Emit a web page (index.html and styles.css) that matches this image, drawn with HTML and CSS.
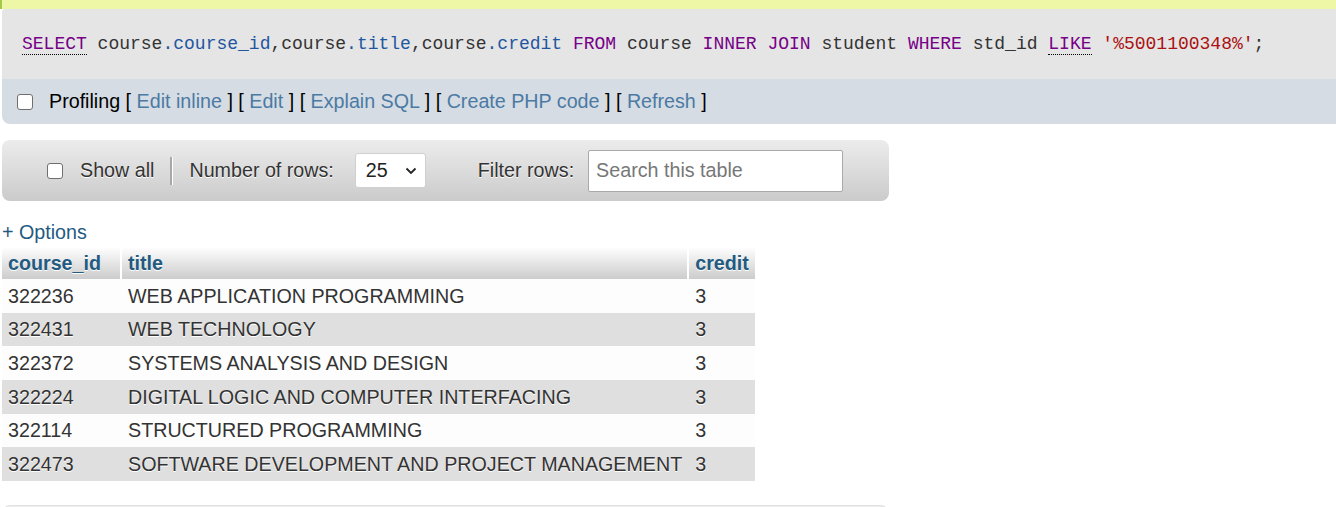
FILE: index.html
```html
<!DOCTYPE html>
<html>
<head>
<meta charset="utf-8">
<link rel="stylesheet" href="styles.css">
</head>
<body>
<div class="page">
  <div class="msg"></div>
  <div class="sqlbox">
    <code class="sql"><span class="kw abbr">SELECT</span> course<span class="v2">.course_id</span>,course<span class="v2">.title</span>,course<span class="v2">.credit</span> <span class="kw">FROM</span> course <span class="kw">INNER</span> <span class="kw">JOIN</span> student <span class="kw">WHERE</span> std_id <span class="kw abbr">LIKE</span> <span class="str">'%5001100348%'</span>;</code>
  </div>
  <div class="profbar">
    <span class="cb"></span>
    <span class="ptext">Profiling [ <a class="plink">Edit inline</a> ] [ <a class="plink">Edit</a> ] [ <a class="plink">Explain SQL</a> ] [ <a class="plink">Create PHP code</a> ] [ <a class="plink">Refresh</a> ]</span>
  </div>

  <div class="navbar">
    <span class="cb cb-nav"></span>
    <span class="navtext">Show all</span>
    <span class="sep"></span>
    <span class="navtext">Number of rows:</span>
    <span class="select"><span>25</span><svg width="12" height="8" viewBox="0 0 12 8"><path d="M1.5 1.5 L6 6 L10.5 1.5" fill="none" stroke="#222" stroke-width="1.8"/></svg></span>
    <span class="navtext filter">Filter rows:</span>
    <span class="search">Search this table</span>
  </div>

  <div class="options">+ Options</div>

  <table class="data">
    <thead>
      <tr><th class="c1">course_id</th><th>title</th><th>credit</th></tr>
    </thead>
    <tbody>
      <tr><td>322236</td><td>WEB APPLICATION PROGRAMMING</td><td>3</td></tr>
      <tr><td>322431</td><td>WEB TECHNOLOGY</td><td>3</td></tr>
      <tr><td>322372</td><td>SYSTEMS ANALYSIS AND DESIGN</td><td>3</td></tr>
      <tr><td>322224</td><td>DIGITAL LOGIC AND COMPUTER INTERFACING</td><td>3</td></tr>
      <tr><td>322114</td><td>STRUCTURED PROGRAMMING</td><td>3</td></tr>
      <tr><td>322473</td><td>SOFTWARE DEVELOPMENT AND PROJECT MANAGEMENT</td><td>3</td></tr>
    </tbody>
  </table>

  <div class="navbar navbar2"></div>
</div>
</body>
</html>
```

FILE: styles.css
```css
html, body {
  margin: 0;
  padding: 0;
  background: #fff;
  overflow: hidden;
}
body {
  font-family: "Liberation Sans", Arial, sans-serif;
  font-size: 19.7px;
  color: #333;
}
.page {
  padding-left: 2px;
}
.msg {
  height: 9px;
  background: #eef7a6;
  border-left: 2px solid #a4c94a;
  margin-left: -2px;
}
.sqlbox {
  background: #e5e5e5;
  height: 70px;
  display: flex;
  align-items: center;
  padding-left: 20px;
  border-top-left-radius: 3px;
}
.sql {
  font-family: "Liberation Mono", "DejaVu Sans Mono", monospace;
  font-size: 18px;
  color: #333;
  white-space: pre;
}
.kw { color: #770088; }
.v2 { color: #1f56a0; }
.str { color: #aa1111; }
.abbr {
  border-bottom: 1px dotted #000;
}
.profbar {
  background: #d5dce3;
  height: 45px;
  display: flex;
  align-items: center;
  padding-left: 15px;
  border-bottom-left-radius: 8px;
  color: #000;
}
.ptext {
  white-space: pre;
}
.cb {
  display: inline-block;
  width: 14px;
  height: 14px;
  border: 1px solid #6f6f6f;
  border-radius: 3px;
  background: #fff;
  margin-right: 16px;
  flex: none;
}
.plink {
  color: #4b7aa4;
}
.navbar {
  margin-top: 16px;
  width: 887px;
  height: 61px;
  border-radius: 8px;
  background: linear-gradient(#ececec, #cbcbcb);
  display: flex;
  align-items: center;
  box-sizing: border-box;
  padding-left: 45px;
  text-shadow: 0 1px 0 #fff;
}
.cb-nav {
  margin-right: 17px;
}
.navtext {
  color: #333;
}
.sep {
  width: 2px;
  height: 28px;
  background: #a8a8a8;
  border-right: 1px solid #fff;
  margin: 0 16px 0 16px;
}
.select {
  margin-left: 21px;
  width: 71px;
  height: 35px;
  box-sizing: border-box;
  background: #fff;
  border: 1px solid #d0d0d0;
  border-radius: 3px;
  display: flex;
  align-items: center;
  justify-content: space-between;
  padding: 0 8px 0 10px;
  color: #222;
  text-shadow: none;
}
.filter {
  margin-left: 52px;
}
.search {
  margin-left: 14px;
  width: 255px;
  height: 42px;
  box-sizing: border-box;
  background: #fff;
  border: 1px solid #a9a9a9;
  border-radius: 2px;
  display: flex;
  align-items: center;
  padding-left: 7px;
  color: #777;
  text-shadow: none;
}
.options {
  color: #235a81;
  margin-top: 18px;
  height: 28px;
  line-height: 26px;
}
table.data {
  border-collapse: collapse;
}
table.data th {
  text-align: left;
  font-weight: bold;
  color: #235a81;
  background: linear-gradient(#ffffff, #cccccc);
  text-shadow: 0 1px 0 #fff;
  height: 32px;
  padding: 0 6px;
  line-height: 22px;
  box-sizing: border-box;
}
table.data th + th {
  border-left: 2px solid #fff;
}
table.data th.c1 {
  width: 119px;
}
table.data td {
  padding: 0 6px;
  height: 33.67px;
  line-height: 22px;
  white-space: nowrap;
  color: #333;
  text-shadow: 0 1px 0 #fff;
}
table.data td + td {
  padding-left: 7px;
}
table.data tbody tr:nth-child(odd) { background: #fdfdfd; }
table.data tbody tr:nth-child(even) { background: #dfdfdf; }
.navbar2 {
  margin-top: 24px;
  border: 1px solid #e2e2e2;
}
```
